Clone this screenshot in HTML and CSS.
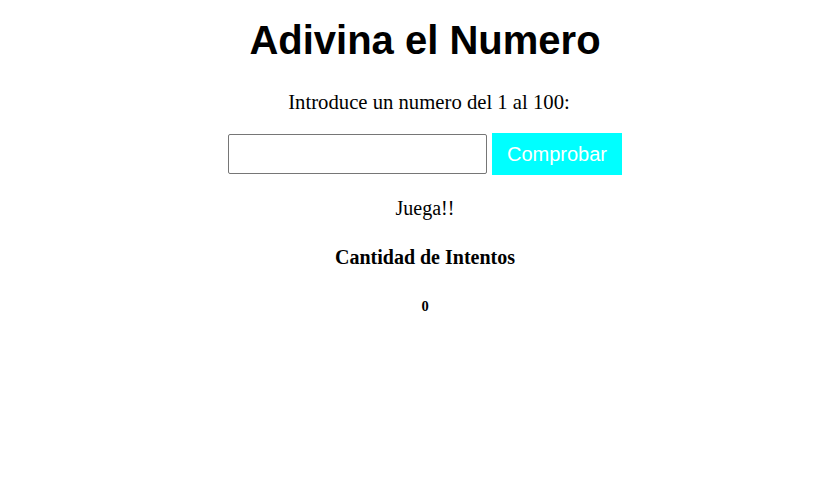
FILE: index.html
```html
<!DOCTYPE html>
<html lang="es">
<head>
<meta charset="utf-8">
<title>Adivina el Numero</title>
<link rel="stylesheet" href="styles.css">
</head>
<body>
<h1 class="title">Adivina el Numero</h1>
<p class="prompt">Introduce un numero del 1 al 100:</p>
<div class="form">
  <input class="guess" type="text">
  <button class="check">Comprobar</button>
</div>
<p class="status">Juega!!</p>
<h3 class="label">Cantidad de Intentos</h3>
<h5 class="count">0</h5>
</body>
</html>
```
FILE: styles.css
```css
body {
  margin: 8px;
  padding-left: 25px;
  font-family: "Liberation Serif", "Times New Roman", serif;
  text-align: center;
  color: #000;
  background: #fff;
}
.title {
  font-family: "Liberation Sans", Arial, sans-serif;
  font-size: 40px;
  font-weight: bold;
  margin: 10px 0 0;
}
.prompt {
  font-size: 20.7px;
  margin: 28px 0 0;
  padding-left: 8px;
}
.form {
  display: flex;
  justify-content: center;
  align-items: center;
  gap: 5px;
  margin-top: 19px;
}
.guess {
  box-sizing: border-box;
  width: 259px;
  height: 40px;
  border: 1px solid #767676;
  border-radius: 2px;
  margin: 0;
  padding: 0 4px;
  font-size: 18px;
}
.check {
  box-sizing: border-box;
  width: 130px;
  height: 42px;
  background: #00ffff;
  color: #fff;
  border: none;
  margin: 0;
  font-family: "Liberation Sans", Arial, sans-serif;
  font-size: 20px;
  padding: 0;
}
.status {
  font-size: 20px;
  margin: 22px 0 0;
}
.label {
  font-size: 20px;
  margin: 26px 0 0;
}
.count {
  font-size: 14.5px;
  margin: 29px 0 0;
}
```
